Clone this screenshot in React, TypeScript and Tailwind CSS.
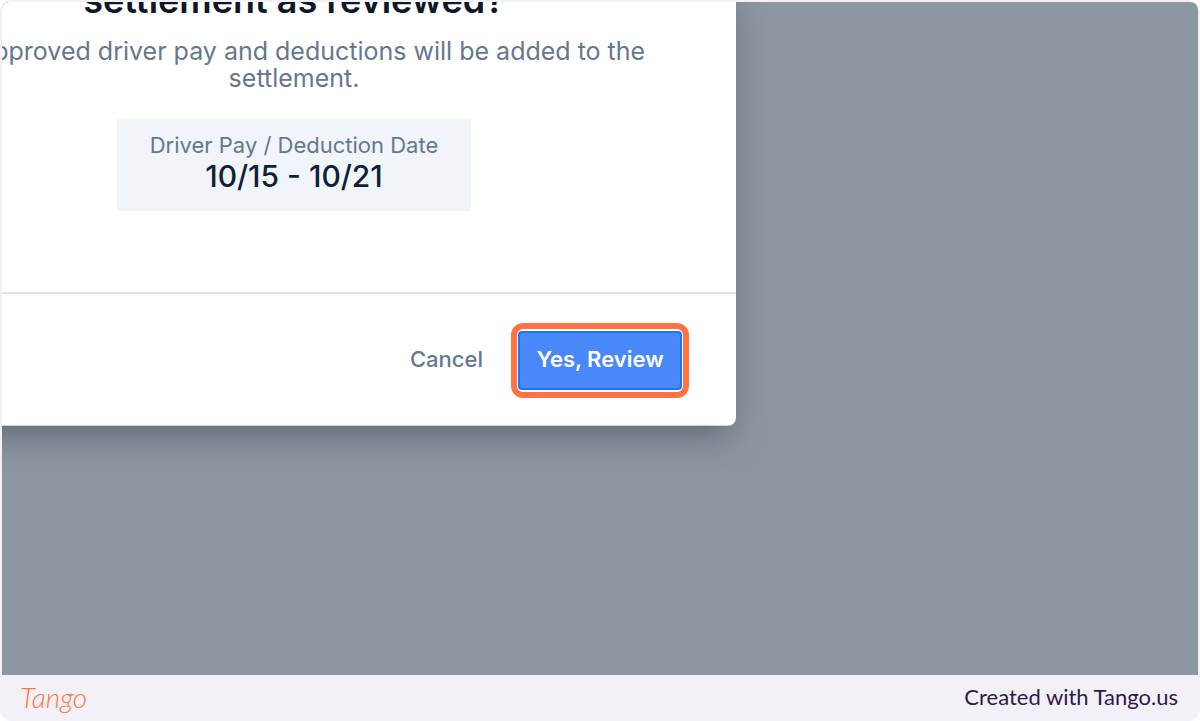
import React from 'react';

interface DateRangeProps {
  label: string;
  range: string;
}

const DateRange: React.FC<DateRangeProps> = ({ label, range }) => (
  <div className="mx-auto mt-[27px] h-[92px] w-[354px] bg-[#f1f4f9] pt-3 text-[#64788f]">
    <p className="text-[22px] leading-7">{label}</p>
    <p className="text-[30px] leading-[34px] font-medium text-[#0f1f38]">{range}</p>
  </div>
);

const ReviewDialog: React.FC = () => (
  <div
    role="dialog"
    aria-labelledby="review-title"
    className="-mt-6 -ml-[150px] w-[884px] shrink-0 rounded-b-lg border-b border-[#cbd0d8] bg-white shadow-[0_16px_32px_-6px_rgba(60,60,75,0.5)]"
  >
    <div className="h-[316px] border-b-2 border-[#dfe4ec] text-center">
      <h1 id="review-title" className="text-[36px] leading-11 font-semibold text-[#0f172a]">
        settlement as reviewed?
      </h1>
      <p className="mx-auto mt-4 w-[740px] text-[25px] leading-[27px] text-[#64788f]">
        All approved driver pay and deductions will be added to the settlement.
      </p>
      <DateRange label="Driver Pay / Deduction Date" range="10/15 - 10/21" />
    </div>

    {/* Actions */}
    <div className="flex h-[131px] items-center justify-end gap-7 pt-px pr-[47px]">
      <button type="button" className="pb-0.5 text-[22px] leading-7 font-medium text-[#64788f]">
        Cancel
      </button>
      <div className="rounded-xl border-6 border-[#ff7442] px-px py-0.5">
        <button
          type="button"
          className="h-[59px] w-[164px] rounded border-2 border-[#1976fa] bg-[#4888f8] pb-0.5 text-[22px] leading-7 font-semibold text-white"
        >
          Yes, Review
        </button>
      </div>
    </div>
  </div>
);

export default function App() {
  return (
    <div className="flex min-h-screen flex-col overflow-hidden rounded-xl bg-[#f3f0f7] px-0.5 pt-0.5 font-['Inter',sans-serif]">
      <main className="flex flex-1 items-start overflow-hidden rounded-t-lg bg-[#8c97a2]">
        <ReviewDialog />
      </main>
      <footer className="flex h-[46px] items-center justify-between pr-5 pb-0.5 pl-[18px]">
        <span className="font-['Lato',sans-serif] text-[28px] leading-8 font-light text-[#ff7442] italic">
          Tango
        </span>
        <span className="font-['Lato',sans-serif] text-[22px] leading-7 text-[#2f1a4a]">
          Created with Tango.us
        </span>
      </footer>
    </div>
  );
}
